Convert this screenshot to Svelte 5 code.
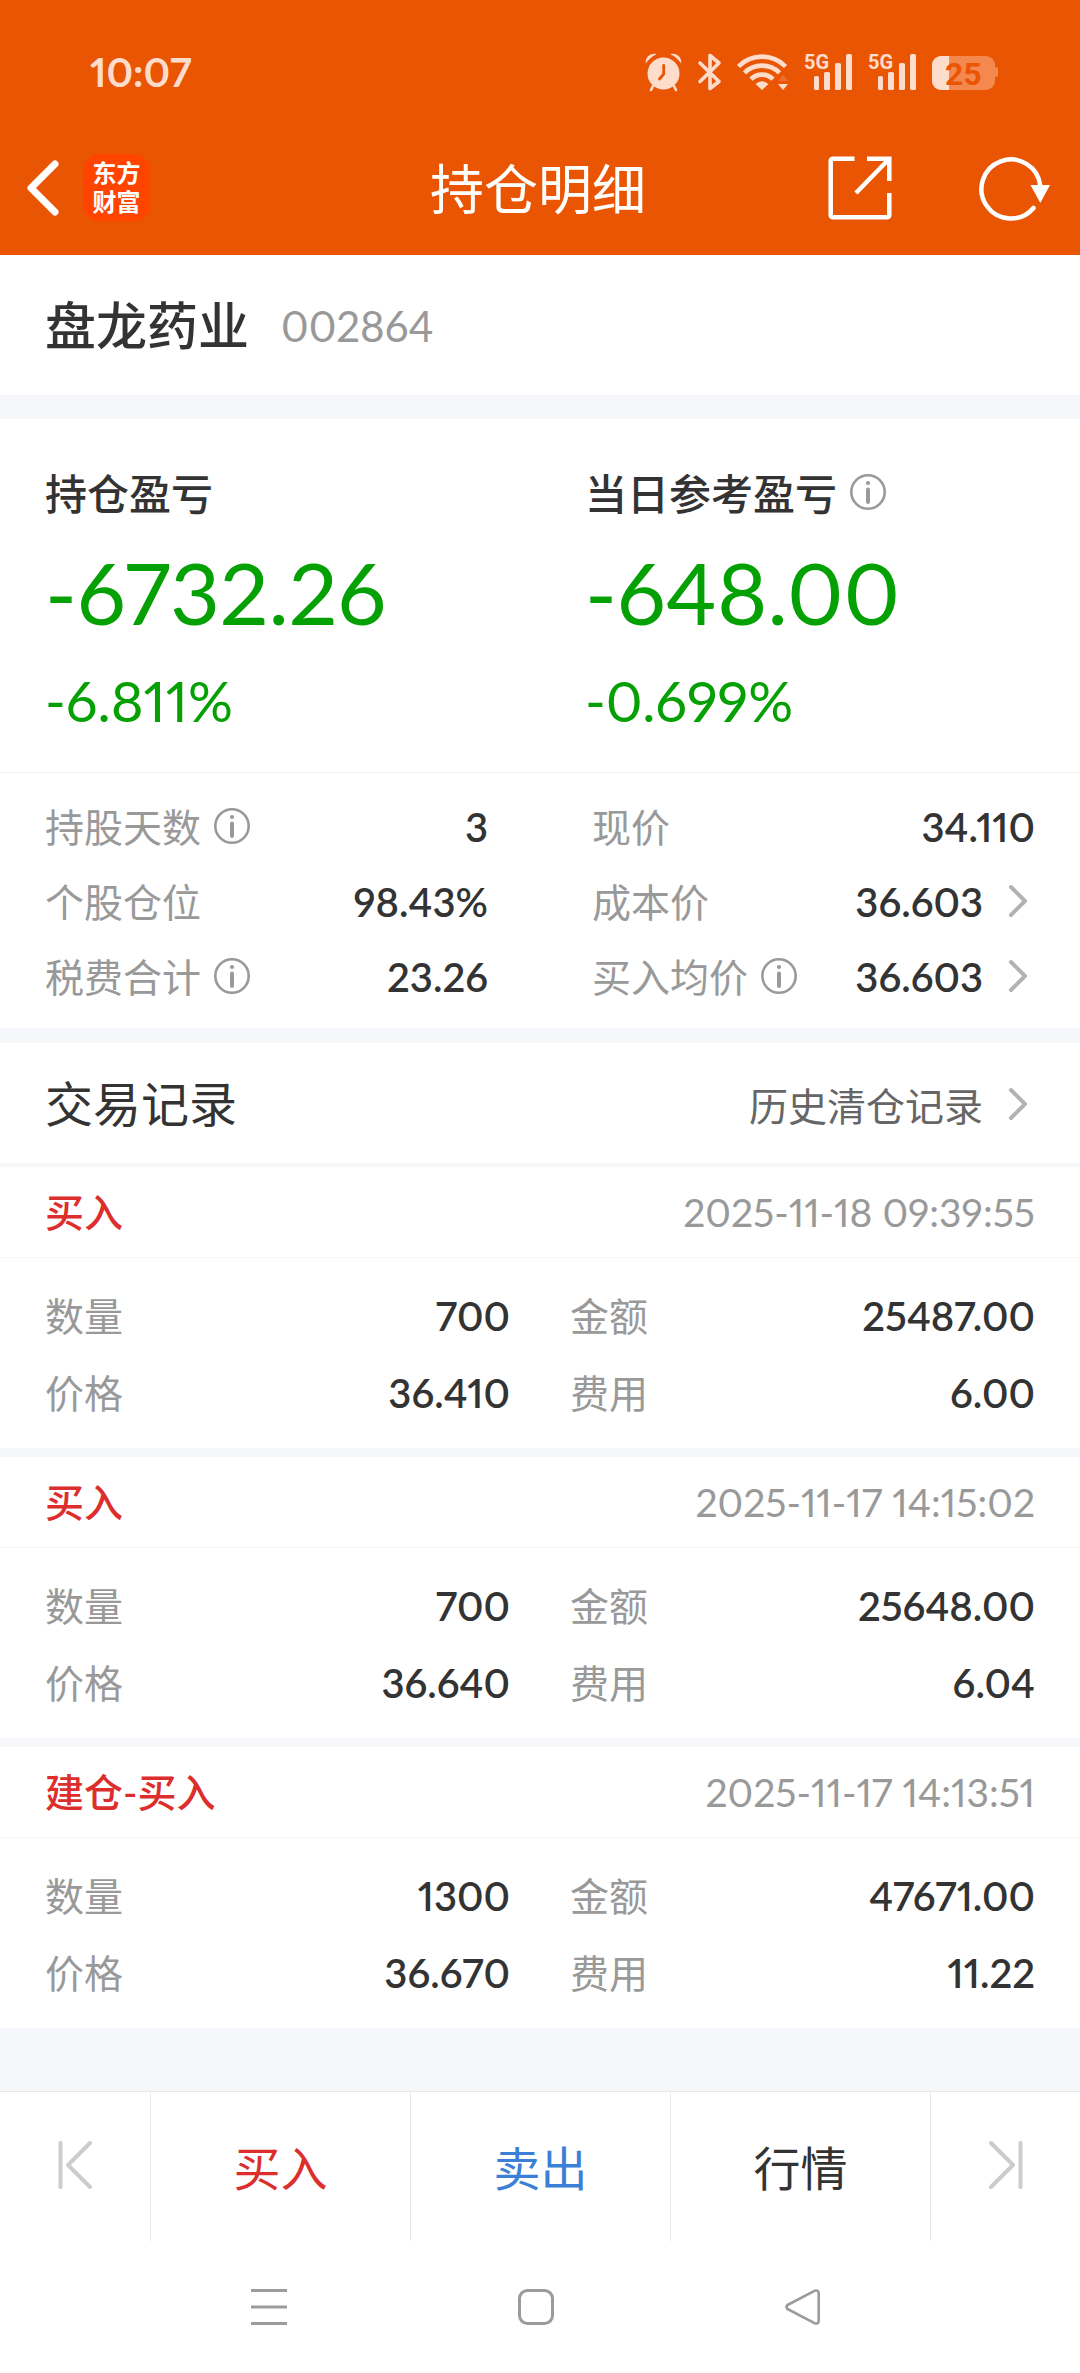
<script lang="ts">
    type Stat = { label: string; value: string; info?: boolean; link?: boolean };
    type Trade = { action: string; time: string; cells: { label: string; value: string }[] };

    const stock = { name: '盘龙药业', code: '002864' };

    const profits = [
        { label: '持仓盈亏', amount: '-6732.26', percent: '-6.811%', info: false },
        { label: '当日参考盈亏', amount: '-648.00', percent: '-0.699%', info: true }
    ];

    const stats: Stat[] = [
        { label: '持股天数', value: '3', info: true },
        { label: '现价', value: '34.110' },
        { label: '个股仓位', value: '98.43%' },
        { label: '成本价', value: '36.603', link: true },
        { label: '税费合计', value: '23.26', info: true },
        { label: '买入均价', value: '36.603', info: true, link: true }
    ];

    const trades: Trade[] = [
        {
            action: '买入',
            time: '2025-11-18 09:39:55',
            cells: [
                { label: '数量', value: '700' },
                { label: '金额', value: '25487.00' },
                { label: '价格', value: '36.410' },
                { label: '费用', value: '6.00' }
            ]
        },
        {
            action: '买入',
            time: '2025-11-17 14:15:02',
            cells: [
                { label: '数量', value: '700' },
                { label: '金额', value: '25648.00' },
                { label: '价格', value: '36.640' },
                { label: '费用', value: '6.04' }
            ]
        },
        {
            action: '建仓-买入',
            time: '2025-11-17 14:13:51',
            cells: [
                { label: '数量', value: '1300' },
                { label: '金额', value: '47671.00' },
                { label: '价格', value: '36.670' },
                { label: '费用', value: '11.22' }
            ]
        }
    ];
</script>

{#snippet infoIcon(label: string)}
    <button class="info" aria-label="{label}说明">
        <svg width="36" height="36" viewBox="0 0 36 36" fill="none" stroke="#999" aria-hidden="true">
            <circle cx="18" cy="18" r="16.7" stroke-width="2.6" />
            <path d="M18 15.5v12.5" stroke-width="4" stroke-linecap="round" />
            <circle cx="18" cy="9" r="2.1" fill="#999" stroke="none" />
        </svg>
    </button>
{/snippet}

{#snippet chevron()}
    <svg class="chevron" width="18" height="32" viewBox="0 0 18 32" fill="none" aria-hidden="true">
        <path d="M2 2l14 14L2 30" stroke="#b2b2b2" stroke-width="4" stroke-linecap="round" stroke-linejoin="round" />
    </svg>
{/snippet}

{#snippet signal()}
    <svg width="48" height="38" viewBox="0 0 48 38" fill="currentColor" aria-hidden="true">
        <text class="network" x="0" y="16">5G</text>
        <rect x="10" y="23" width="5" height="14" rx="1.5" />
        <rect x="20" y="19" width="6" height="18" rx="1.5" />
        <rect x="31" y="10" width="6" height="27" rx="1.5" />
        <rect x="42" y="1" width="6" height="36" rx="1.5" />
    </svg>
{/snippet}

<div class="page">
    <header class="top">
        <div class="status">
            <span class="clock">10:07</span>
            <div class="status-icons">
                <svg width="37" height="38" viewBox="0 0 37 38" fill="currentColor" aria-hidden="true">
                    <path d="M0.8 10.5C0 4.5 5.5 -0.5 11.5 1.2C8 2.6 3.5 6.5 0.8 10.5Z" />
                    <path d="M36.2 10.5C37 4.5 31.5 -0.5 25.5 1.2C29 2.6 33.5 6.5 36.2 10.5Z" />
                    <path d="M8 33l-2 4M29 33l2 4" stroke="currentColor" stroke-width="2.6" stroke-linecap="round" />
                    <circle cx="18.5" cy="20.5" r="16" />
                    <path d="M18.7 12.5v8.5l-4.2 5" fill="none" stroke="#ea5504" stroke-width="2.8" stroke-linecap="round" stroke-linejoin="round" />
                </svg>
                <svg width="23" height="38" viewBox="0 0 23 38" fill="none" stroke="currentColor" stroke-width="3.6" stroke-linecap="round" stroke-linejoin="round" aria-hidden="true">
                    <path d="M2 10l19 18.5L12 35.5V2.5l9 7.5L2 28.5" />
                </svg>
                <svg width="51" height="38" viewBox="0 0 51 38" fill="none" stroke="currentColor" aria-hidden="true">
                    <path d="M1.5 13.5A33 33 0 0 1 48.5 13.5" stroke-width="4.6" />
                    <path d="M7.5 19.8A25 25 0 0 1 42.5 19.8" stroke-width="4.6" />
                    <path d="M14 26.2A15.5 15.5 0 0 1 36 26.2" stroke-width="4.6" />
                    <path d="M18.5 31Q25 25.5 31.5 31L25 37Z" fill="currentColor" stroke="none" />
                    <path d="M41 28l5-6 5 6Z" fill="#f07030" stroke="none" />
                    <path d="M41 31h10l-5 6Z" fill="currentColor" stroke="none" />
                </svg>
                {@render signal()}
                {@render signal()}
                <svg width="66" height="38" viewBox="0 0 66 38" aria-hidden="true">
                    <path d="M62 14h2q2 0 2 2v6q0 2-2 2h-2Z" fill="#f4884f" />
                    <rect x="0" y="3" width="63" height="34" rx="9" fill="#f4884f" />
                    <path d="M9 3h8v34H9a9 9 0 0 1-9-9V12a9 9 0 0 1 9-9Z" fill="currentColor" />
                    <text class="battery" x="13" y="32">25</text>
                </svg>
            </div>
        </div>
        <nav class="titlebar">
            <div class="title-left">
                <button class="icon" aria-label="返回">
                    <svg width="34" height="56" viewBox="0 0 34 56" fill="none" aria-hidden="true">
                        <path d="M30 4L6 28l24 24" stroke="#fff" stroke-width="7" stroke-linecap="round" stroke-linejoin="round" />
                    </svg>
                </button>
                <span class="brand">东方<br />财富</span>
            </div>
            <h1>持仓明细</h1>
            <div class="title-right">
                <button class="icon" aria-label="分享">
                    <svg width="64" height="64" viewBox="0 0 64 64" fill="none" stroke="#fff" stroke-width="4.5" aria-hidden="true">
                        <path d="M26.5 2.8H5.5Q2.7 2.8 2.7 5.6V58.5Q2.7 61.3 5.5 61.3H58.5Q61.3 61.3 61.3 58.5V37" />
                        <path d="M39 2.8H61.3V25M61 3L28 37" />
                    </svg>
                </button>
                <button class="icon" aria-label="刷新">
                    <svg width="72" height="64" viewBox="0 0 72 64" fill="none" aria-hidden="true">
                        <path d="M54.5 52A29.5 29.5 0 1 1 61.3 30" stroke="#fff" stroke-width="4.5" stroke-linecap="round" />
                        <path d="M51.5 29H71L61.3 47Z" fill="#fff" />
                    </svg>
                </button>
            </div>
        </nav>
    </header>

    <section class="stock">
        <h2>{stock.name}</h2>
        <span class="code">{stock.code}</span>
    </section>

    <section class="profits">
        {#each profits as profit}
            <div class="profit">
                <div class="profit-label">
                    {profit.label}
                    {#if profit.info}{@render infoIcon(profit.label)}{/if}
                </div>
                <div class="amount">{profit.amount}</div>
                <div class="percent">{profit.percent}</div>
            </div>
        {/each}
    </section>

    <section class="stats">
        {#each stats as stat}
            <div class="row">
                <span class="label">{stat.label}</span>
                {#if stat.info}{@render infoIcon(stat.label)}{/if}
                {#if stat.link}
                    <button class="value">{stat.value}{@render chevron()}</button>
                {:else}
                    <span class="value">{stat.value}</span>
                {/if}
            </div>
        {/each}
    </section>

    <section class="records-head">
        <h3>交易记录</h3>
        <button class="history">历史清仓记录{@render chevron()}</button>
    </section>

    <main class="records">
        {#each trades as trade}
            <article class="trade">
                <header class="trade-head">
                    <span class="action">{trade.action}</span>
                    <time>{trade.time}</time>
                </header>
                <div class="trade-body">
                    {#each trade.cells as cell}
                        <div class="row">
                            <span class="label">{cell.label}</span>
                            <span class="value">{cell.value}</span>
                        </div>
                    {/each}
                </div>
            </article>
        {/each}
    </main>

    <footer class="actions">
        <button aria-label="上一只">
            <svg width="34" height="50" viewBox="0 0 34 50" fill="none" stroke="#ccc" stroke-width="4" stroke-linecap="round" stroke-linejoin="round" aria-hidden="true">
                <path d="M2.5 3v44M32 3L10 25l22 22" />
            </svg>
        </button>
        <button class="text buy">买入</button>
        <button class="text sell">卖出</button>
        <button class="text">行情</button>
        <button aria-label="下一只">
            <svg width="34" height="50" viewBox="0 0 34 50" fill="none" stroke="#ccc" stroke-width="4" stroke-linecap="round" stroke-linejoin="round" aria-hidden="true">
                <path d="M31.5 3v44M2 3l22 22L2 47" />
            </svg>
        </button>
    </footer>

    <nav class="system" aria-label="系统导航">
        <button class="icon" aria-label="最近任务">
            <svg width="36" height="36" viewBox="0 0 36 36" stroke="#9b9b9b" stroke-width="3" aria-hidden="true">
                <path d="M0 1.5h36M0 18h36M0 34.5h36" />
            </svg>
        </button>
        <button class="icon" aria-label="主页">
            <svg width="36" height="36" viewBox="0 0 36 36" fill="none" stroke="#9b9b9b" stroke-width="3" aria-hidden="true">
                <rect x="1.5" y="1.5" width="33" height="33" rx="8" />
            </svg>
        </button>
        <button class="icon" aria-label="返回上一页">
            <svg width="36" height="36" viewBox="0 0 36 36" fill="none" stroke="#9b9b9b" stroke-width="2.6" stroke-linejoin="round" aria-hidden="true">
                <path d="M2.5 16L29.5 1.8Q33.7 0.5 33.7 4.5V31.5Q33.7 35.5 29.5 34.2L2.5 20Q0.5 18 2.5 16Z" />
            </svg>
        </button>
    </nav>
</div>

<style>
    :global(body) {
        margin: 0;
        background: #fff;
    }

    .page {
        font-family: Lato, 'Noto Sans CJK SC', sans-serif;
        font-variant-numeric: proportional-nums;
        color: #333;
        background: #fff;
    }

    button {
        display: flex;
        align-items: center;
        justify-content: center;
        margin: 0;
        padding: 0;
        border: none;
        background: none;
        font: inherit;
        color: inherit;
        cursor: pointer;
    }

    svg {
        display: block;
        flex-shrink: 0;
        overflow: visible;
    }

    h1,
    h2,
    h3 {
        margin: 0;
        font-weight: 400;
    }

    .top {
        background: #ea5504;
        color: #fff;
        padding-bottom: 32px;
    }

    .status {
        display: flex;
        align-items: center;
        justify-content: space-between;
        padding: 48px 82px 0 90px;
        color: #fddccc;
    }

    .clock {
        font-size: 40px;
        line-height: 48px;
        font-weight: 700;
    }

    .status-icons {
        display: flex;
        gap: 16px;
    }

    .network {
        font: 700 20px Roboto, sans-serif;
    }

    .battery {
        font: 700 32px Roboto, sans-serif;
        fill: #ea5504;
    }

    .titlebar {
        display: grid;
        grid-template-columns: 1fr auto 1fr;
        align-items: center;
        padding: 56px 29px 0 25px;
    }

    .title-left {
        display: flex;
        align-items: center;
        gap: 24px;
    }

    .title-right {
        display: flex;
        justify-content: flex-end;
        gap: 87px;
    }

    .brand {
        width: 67px;
        padding: 4px 0 5px;
        border-radius: 16px;
        background: #ff4400;
        font-size: 24px;
        line-height: 29px;
        font-weight: 700;
        text-align: center;
    }

    h1 {
        padding-top: 5px;
        font-size: 54px;
        line-height: 66px;
    }

    .stock {
        display: flex;
        align-items: center;
        gap: 32px;
        padding: 36px 45px 34px;
        border-bottom: 24px solid #f6f7fa;
    }

    h2 {
        font-size: 51px;
        line-height: 70px;
        font-weight: 500;
    }

    .code {
        font-size: 42px;
        line-height: 70px;
        color: #999;
    }

    .profits {
        display: grid;
        grid-template-columns: 1fr 1fr;
        padding: 45px 0 38px;
        border-bottom: 1px solid #f2f2f2;
    }

    .profit {
        padding: 0 45px;
    }

    .profit-label {
        display: flex;
        align-items: center;
        gap: 13px;
        font-size: 42px;
        line-height: 60px;
        font-weight: 500;
    }

    .amount {
        padding-top: 16px;
        font-size: 86px;
        line-height: 104px;
        color: #04a004;
    }

    .percent {
        padding-top: 24px;
        font-size: 56px;
        line-height: 66px;
        color: #04a004;
    }

    .stats {
        display: grid;
        grid-template-columns: 1fr 1fr;
        column-gap: 104px;
        padding: 17px 45px 13px;
        border-bottom: 15px solid #f6f7fa;
    }

    .row {
        display: flex;
        align-items: center;
        font-size: 39px;
        line-height: 75px;
    }

    .label {
        color: #999;
    }

    .info {
        margin-left: 13px;
        padding-bottom: 4px;
    }

    .profit-label .info {
        margin-left: 0;
    }

    .value {
        margin-left: auto;
        font-size: 40px;
        font-weight: 600;
    }

    .chevron {
        margin: 0 8px 4px 26px;
    }

    .records-head {
        display: flex;
        align-items: center;
        justify-content: space-between;
        padding: 2px 45px 0;
        line-height: 118px;
        border-bottom: 4px solid #f6f7f8;
    }

    h3 {
        font-size: 48px;
    }

    .history {
        padding-top: 4px;
        font-size: 39px;
        line-height: 114px;
        color: #666;
    }

    .trade + .trade {
        border-top: 9px solid #f6f7fa;
    }

    .trade-head {
        display: flex;
        align-items: center;
        justify-content: space-between;
        padding: 0 45px;
        font-size: 39px;
        line-height: 90px;
        border-bottom: 1px solid #f5f5f5;
    }

    .action {
        color: #dc2e2c;
        font-weight: 500;
    }

    time {
        color: #999;
    }

    .trade-body {
        display: grid;
        grid-template-columns: 1fr 1fr;
        column-gap: 60px;
        padding: 20px 45px 16px;
    }

    .trade-body .row {
        line-height: 77px;
    }

    .actions {
        display: grid;
        grid-template-columns: 15fr 26fr 26fr 26fr 15fr;
        border-top: 63px solid #f6f7fa;
    }

    .actions button {
        border-top: 1px solid #e6e6e6;
    }

    .actions button + button {
        border-left: 1px solid #e9e9e9;
    }

    .actions .text {
        padding-top: 3px;
        font-size: 47px;
        line-height: 146px;
    }

    .actions svg {
        margin-bottom: 4px;
    }

    .buy {
        color: #dc2e2c;
    }

    .sell {
        color: #3b80d6;
    }

    .system {
        display: flex;
        justify-content: center;
        gap: 231px;
        padding: 48px 9px 48px 0;
    }
</style>
